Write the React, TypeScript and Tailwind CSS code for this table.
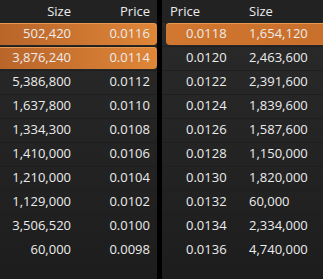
const bids = [
  ['502,420', '0.0116'],
  ['3,876,240', '0.0114'],
  ['5,386,800', '0.0112'],
  ['1,637,800', '0.0110'],
  ['1,334,300', '0.0108'],
  ['1,410,000', '0.0106'],
  ['1,210,000', '0.0104'],
  ['1,129,000', '0.0102'],
  ['3,506,520', '0.0100'],
  ['60,000', '0.0098'],
]

const asks = [
  ['0.0118', '1,654,120'],
  ['0.0120', '2,463,600'],
  ['0.0122', '2,391,600'],
  ['0.0124', '1,839,600'],
  ['0.0126', '1,587,600'],
  ['0.0128', '1,150,000'],
  ['0.0130', '1,820,000'],
  ['0.0132', '60,000'],
  ['0.0134', '2,334,000'],
  ['0.0136', '4,740,000'],
]

export default function App() {
  return (
    <div
      className="flex h-[279px] w-[323px] overflow-hidden bg-black text-[13px] text-[#ececec]"
      style={{ fontFamily: '"Open Sans", "Noto Sans", sans-serif' }}
    >
      {/* bids */}
      <div className="flex w-[157px] flex-col bg-gradient-to-b from-[#2a2a2a] to-[#1d1d1d]">
        <div className="flex h-[23px] items-center bg-[#222]">
          <span className="w-[71px] text-right">Size</span>
          <span className="w-[79px] text-right">Price</span>
        </div>
        {bids.map(([size, price], i) => (
          <div key={i} className="h-[24px] border-b border-[#1e1e1e] pb-px">
            <div
              className={`flex h-full items-center rounded-r-[4px] ${
                i < 2 ? 'bg-gradient-to-r from-[#b9652a] to-[#df8638] shadow-[inset_0_1px_0_#e99a52]' : ''
              }`}
            >
              <span className="w-[71px] text-right">{size}</span>
              <span className="w-[79px] text-right">{price}</span>
            </div>
          </div>
        ))}
      </div>

      {/* divider */}
      <div className="w-[5px] bg-black" />

      {/* asks */}
      <div className="flex flex-1 flex-col bg-gradient-to-b from-[#2b2b2b] to-[#1d1d1d]">
        <div className="flex h-[23px] items-center bg-[#222]">
          <span className="w-[87px] pl-[8px]">Price</span>
          <span>Size</span>
        </div>
        {asks.map(([price, size], i) => (
          <div key={i} className="h-[24px] border-b border-[#1e1e1e] pb-px pl-[4px]">
            <div
              className={`flex h-full items-center rounded-l-[4px] ${
                i < 1 ? 'bg-gradient-to-r from-[#d2772f] to-[#c86f2c] shadow-[inset_0_1px_0_#e99a52]' : ''
              }`}
            >
              <span className="w-[83px] pl-[20px]">{price}</span>
              <span>{size}</span>
            </div>
          </div>
        ))}
      </div>
    </div>
  )
}
